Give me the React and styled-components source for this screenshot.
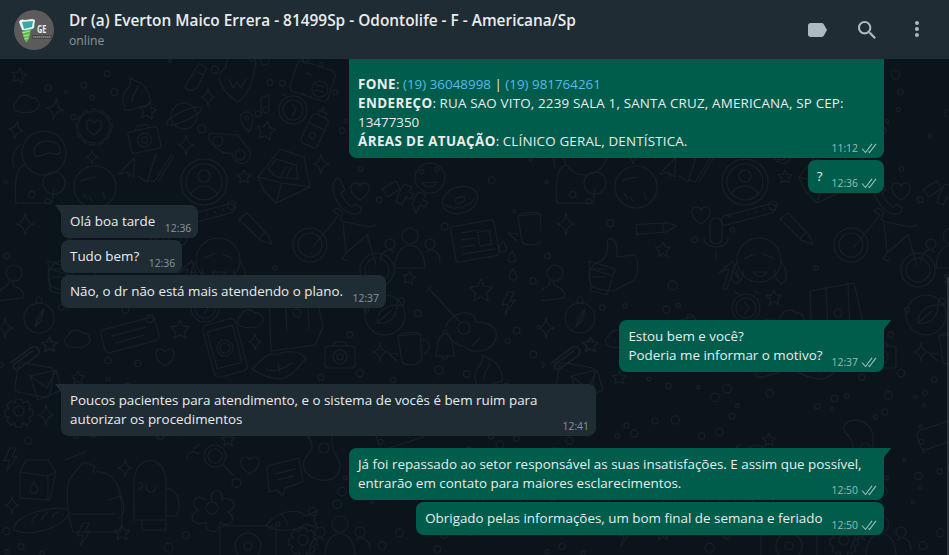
import React from 'react';
import styled, { createGlobalStyle } from 'styled-components';

// wallpaper doodles, each one drawn round 0,0
const star = (r = 8) => {
  let pts = [];
  for (let i = 0; i < 10; i++) {
    const a = (Math.PI / 5) * i - Math.PI / 2;
    const d = i % 2 ? r * 0.48 : r;
    pts.push(`${(Math.cos(a) * d).toFixed(1)},${(Math.sin(a) * d).toFixed(1)}`);
  }
  return `<polygon points="${pts.join(' ')}"/>`;
};
const spark = (r = 8) =>
  `<path d="M0 ${-r}Q1 -1 ${r * 0.8} 0Q1 1 0 ${r}Q-1 1 ${-r * 0.8} 0Q-1 -1 0 ${-r}Z"/>`;
const cloud = '<path d="M-12 7c-6-1-7-9-2-11 1-6 10-8 14-3 6-1 10 5 7 10-3 5-12 5-19 4z"/>';
const heart = '<path d="M0 9C-13 1-10-8-5-8c2 0 4 1 5 3 1-2 3-3 5-3 5 0 8 9-5 17z"/>';
const flowerHeart =
  '<circle r="16"/><circle r="18" stroke-dasharray="6 3"/><path d="M0 8C-11 1-8-7-4-7c2 0 3 1 4 3 1-2 2-3 4-3 4 0 7 8-4 15z"/>';
const astronaut =
  '<circle r="22"/><path d="M-10 -2c0-12 24-14 26-2 1 6-4 6-8 4-5-2-18 10-18-2z"/><path d="M-20 12c-8 2-10 20-8 38h36l2-14M-23 -8c-8 4-10 14-7 22"/><circle cx="10" cy="30" r="11"/>';
const moon =
  '<circle r="21"/><path d="M-14-6c6-4 10-2 14-4M-6 10l3 4M8 6l2 6M-12 6l4 6"/>';
const camera =
  '<rect x="-15" y="-9" width="30" height="22" rx="3"/><path d="M-7-9l2-4h10l2 4"/><circle cy="2" r="7"/><circle cy="2" r="3"/>';
const planet =
  '<circle r="13"/><ellipse rx="19" ry="5" transform="rotate(-24)"/>';
const flameHeart =
  '<path d="M0 20C-22 6-22-10-12-14c-2-6 4-10 6-16 2 6 6 6 8 2 2 4 8-2 12-8 2 6 6 16 2 24-1 14-6 24-16 32z"/><path d="M-9-3l4 9 4-6 4 6 5-9"/>';
const clock = '<circle r="14"/><circle r="10"/><path d="M-1-6l4 6-4 6M-11-16l4 2M9-17l4 2"/>';
const bottle =
  '<rect x="-9" y="-15" width="18" height="32" rx="4"/><path d="M-4-15v-5h8v5M-9-4h18"/><circle cy="6" r="3"/>';
const note = '<path d="M-4 8V-8l8-3v14"/><circle cx="-7" cy="8" r="3"/><circle cx="1" cy="4" r="3"/>';
const pin = '<path d="M0 12C-8 2-8-8 0-8s8 10 0 20z"/><circle cy="-2" r="2"/>';
const glasses =
  '<path d="M-20-12l28 2 12 16c2 8-4 14-10 12-6-1-8-6-8-10-4 1-10 0-14-4-6-4-12-10-8-16z"/><circle cx="-12" cy="-4" r="5"/><circle cx="10" cy="10" r="5"/>';
const envelope =
  '<path d="M-26 2L-4-26 20-18 26 12-8 28-20 16z"/><path d="M-26 2L-2 8 26 12M-8 28L-2 8"/><path d="M-16-6l8-10 20 6 2 14-22-2z"/><path d="M2-8l-6 10M8-8l-6 10"/>';
const profile =
  '<circle r="23"/><circle r="18"/><circle cy="-6" r="6"/><path d="M-13 13c2-12 24-12 26 0"/>';
const checks = '<path d="M-20 8l9 6L-2-14M-10 12l6 2L14-14M0 14L16-12"/>';
const plane = '<path d="M-10 4L10-8 4 10-1 4zM-1 4l1 5"/>';
const rocket =
  '<path d="M-14 22c2-10-4-6 0-16 2-6 8-6 6-16 6 4 16 4 20 20 2 6-2 6 0 6-10 2-18 8-26 6z"/><path d="M-6 14c0-10 4-8 6-16"/>';
const pen = '<path d="M-8 10L2-14l8 3L4 10c-4 5-12 5-12 0zM1-6l7 3"/>';
const card =
  '<rect x="-20" y="-18" width="40" height="32" rx="5" transform="rotate(18)"/><circle cx="8" cy="6" r="8"/><path d="M-6-10l6 2M4 2l8 2M3 7l8 2"/>';
const face =
  '<circle r="15"/><path d="M-8-4c-4-3-2-6 0-4 1-2 4 0 0 4zM6-6c-3-3-1-6 1-4 2-1 4 1-1 4zM-8 5c4 6 12 5 15-1z"/>';
const donut =
  '<ellipse rx="18" ry="13" transform="rotate(-18)"/><ellipse rx="5" ry="3" transform="rotate(-18)"/><path d="M-15 4l3 3 3-1 3 3 4-2 4 1 4-3 4-1 4-5"/>';
const phone =
  '<path d="M-8-18c-6 2-6 6-6 10 0 12 10 24 20 26 5 1 9-2 8-6l-6-4-3 3c-4-2-10-10-11-14l4-3z"/>';
const ffCard = '<path d="M-18-6l14-8 4 8-12 8zM-2 0l6-11 8 3-3 5 5 2-3 5-5-2-4 8-6-3zM12 8l6-11 8 3-3 5 5 2-3 5-5-2-4 8z"/>';
const pencil = '<path d="M-20-6l6-8 26 16 6 8-12-1zM-16-12l-4 8M8 0l-4 8"/>';
const bike =
  '<circle cx="-33" cy="0" r="17"/><circle cx="-33" cy="0" r="12"/><circle cx="34" cy="25" r="17"/><circle cx="34" cy="25" r="12"/><path d="M-30 2L-4-30l-6-4 4-3 6 4-3 7 4 3 26 5 6-2M0-22l3 30 22-19M3 8l-4 6 6 2M24-10l9 30"/>';
const people =
  '<circle cy="-14" r="8"/><path d="M-15 18c0-30 30-30 30 0z"/><circle cx="-20" cy="-6" r="5"/><path d="M-30 12c0-12 10-14 14-10"/><circle cx="20" cy="-6" r="5"/><path d="M30 12c0-12-10-14-14-10"/>';
const news =
  '<rect x="-22" y="-18" width="44" height="36" rx="3" transform="rotate(-10)"/><path d="M-14-8l18-3M-14-1l14-2M-14 6l14-2M-12 13l32-5"/><rect x="4" y="-8" width="12" height="14" transform="rotate(-10)"/>';
const mug =
  '<path d="M-12-14l22-2 2 26c-4 6-16 6-20 2zM12-10c8-2 10 10 2 14M-12-14c2-3 20-5 22-2"/><path d="M-12 4l-10-1 9 8"/>';
const drops = '<path d="M0-7c-5 7-5 11 0 11s5-4 0-11z"/>';
const person = '<circle cy="-12" r="8"/><path d="M-5-4c-1 4-1 4-4 6-7 4-10 8-8 14l26-3c2-6-3-10-9-12-2-2-2-3-1-5"/>';
const glass = '<path d="M-12-14l26 8-8 26-16-4zM-10-6l22 7"/>';
const bolt = '<path d="M-2-12l-6 13 6-1-3 11 10-15-5 1 4-9z"/>';
const compass =
  '<circle r="15"/><circle cy="-18" r="3"/><path d="M5-9L-4 9l2-10zM5-9l-3 12-6 6"/>';
const guitar =
  '<path d="M-30-32l30 32M-34-30l5-6"/><circle cx="4" cy="6" r="6"/><path d="M-8-4C-22 6-8 24 4 24c6 8 28 8 32-8 2-12-8-16-20-16 0-8-12-14-24-4z"/><path d="M12 24l8-8"/>';
const whatsPhone =
  '<rect x="-17" y="-27" width="34" height="54" rx="5" transform="rotate(-15)"/><rect x="-13" y="-20" width="26" height="38" transform="rotate(-15)"/><circle r="8"/><circle r="5"/>';
const lips =
  '<path d="M-28 4C-18-4-14-14-2-10c4-4 22-6 28 4-8 6-12 18-26 20-12 0-22-6-28-10zM-14 4c6 4 18 0 26-6M-2-2l2 10"/>';
const bell = '<path d="M-10 10c4-6 0-20 10-22 10 2 6 16 10 22zM-3 10c0 4 6 4 6 0"/><circle cy="-14" r="2"/>';
const clip = '<path d="M-14 8L6-7c6-4 12 3 6 8L-6 14c-3 2-7-2-4-5L8-4"/>';
const band = '<path d="M-26 4L20-8c6-1 8 6 2 9L-24 13c-5 1-6-7-2-9zM-2 2l1 1M6 0l1 1M14-3l1 1"/>';
const mic = '<rect x="-6" y="-22" width="12" height="26" rx="6"/><path d="M-12-2c0 12 24 12 24 0M0 10v10"/>';
const thumb =
  '<path d="M-10-4c6-4 8-12 6-20 4-6 10 0 10 10v6l16-2c6 0 6 20 0 26L2 26c-8 0-14-2-20-4-6-6-6-22 8-26z"/><path d="M-18 4h12M-18 12h12"/>';
const girl =
  '<circle r="22"/><path d="M-22 2c-8 10-6 20 0 22 4-4 8-10 6-14M22 2c8 10 6 20 0 22-4-4-8-10-6-14M-14-2l10-4M4-6l10 4M-6 12c4 6 10 6 14 0z"/>';
const map =
  '<path d="M-24-14l44-8 10 44-8 18-44 6z"/><path d="M-8-18l2 44M14-22l2 46"/><circle cx="4" cy="8" r="4"/>';
const leaf = '<circle r="20"/><path d="M-8 8C-8-6 4-10 12-10c0 10-6 20-20 18zM-8 8L6-4"/>';
const arrow = '<path d="M-4 14L2-6l-10 4 14-12 6 18-6-8-6 18z"/>';
const paperBar = '<rect x="-28" y="-12" width="56" height="24" rx="4" transform="rotate(-15)"/><path d="M-18 1l34-9M-14 8l28-8"/>';
const mail =
  '<rect x="-24" y="-16" width="36" height="30" rx="4" transform="rotate(10)"/><path d="M-10-6l26-6 6 20-24 10zM-10-6l17 12 9-18"/>';
const gear =
  '<circle r="5"/><path d="M-3-12h6l1 4 4-2 4 4-2 4 4 1v6l-4 1 2 4-4 4-4-2-1 4h-6l-1-4-4 2-4-4 2-4-4-1v-6l4-1-2-4 4-4 4 2z"/>';
const carton = '<path d="M-18-10l6-12h22l8 12-6 28-30-2zM-18-10l28 4 8-4M10-6v24M-4 0c-5 7-5 11 0 11s5-4 0-11z"/>';
const backpack =
  '<path d="M-26-10l14-18 12 4-2 6c20-2 32 10 28 60H-22c-4-14-8-36-4-52zM-30-30l20-8M-24 24h44M14 10l12-4c4 10 4 20-2 22"/>';
const bread = '<path d="M-28 10C-30-6 16-16 26-10c6 10-30 30-54 20zM-10 2c0-4 4-6 6-8M0 0c0-4 4-6 6-8M10-2c0-4 4-4 6-6"/>';
const helmet =
  '<path d="M-16 30V-10c2-26 30-26 32 0v40zM-10-8c4 2 2 8-2 8M6-4c0 8-10 8-10 0M16-2c14 2 16 20 10 28H16M-8 30v10h24V30"/>';
const flower =
  '<circle r="6"/><path d="M0-6C-4-20 12-22 10-8c10-6 18 8 6 12 10 6 2 18-8 10 0 14-16 12-14 0-12 6-20-6-8-12-10-6-2-18 8-10"/>';
const fish = '<path d="M-24 8C-14-8 8-10 16-2l12-6-4 10 4 8-12-4c-10 8-28 8-40 2zM-8-4l6 10"/><circle cx="-12" cy="6" r="2"/>';
const bubble = '<path d="M-18-14l32-8 4 24-18 6-2 8-6-6-8 2zM-10-6l20-5M-8 0l16-4"/>';
const snake = '<path d="M-14-30c14-6 28 4 26 20-2 12 16 20 4 34-8 8-28 4-32-8-4-14 14-14 6-28-4-8-12-10-4-18z"/><circle cx="4" cy="-4" r="5"/>';
const paw = '<circle cx="10" cy="-4" r="11"/><circle cx="10" cy="-4" r="7"/><path d="M18 5l10 10M-12-10l6-6M-18-2c0-6 6-8 12-4"/>';
const turntable = '<rect x="-28" y="-20" width="56" height="40" rx="4"/><circle r="13"/><circle r="4"/>';
const milkbar = '<rect x="-24" y="-8" width="48" height="20" rx="5" transform="rotate(-18)"/>';

const doodles = [
  [star(8), 19, 76, 10], [cloud, 31, 105, 0], [spark(11), 55, 109, 10], [spark(9), 16, 130, 10],
  [flowerHeart, 94, 127, 0], [astronaut, 44, 153, 0], [moon, 95, 187, 0], [camera, 144, 138, -12],
  [star(9), 148, 111, 10], [spark(9), 208, 97, 0], [planet, 184, 116, 0], [flameHeart, 238, 82, 0],
  [clock, 293, 110, 0], [bottle, 315, 130, 25], [note, 265, 106, 0], [pin, 247, 120, -10],
  [star(10), 266, 131, 10], [glasses, 230, 145, 0], [envelope, 284, 175, 0], [profile, 204, 182, 0],
  [checks, 158, 168, 0], [plane, 127, 168, -15], [spark(10), 186, 145, 0], [spark(7), 92, 157, 0],
  [spark(10), 321, 164, 0], [star(7), 244, 177, 0], [rocket, 138, 88, 0], [pen, 195, 77, 10],
  [card, 312, 83, 0], [face, 430, 178, 0], [donut, 460, 200, 0], [phone, 347, 196, 0],
  [heart, 360, 191, 0], [ffCard, 400, 195, 0], [pencil, 257, 230, 15], [bike, 343, 245, 0],
  [people, 410, 250, 0], [news, 475, 241, 0], [mug, 530, 230, 0], [spark(11), 566, 224, 0],
  [drops, 503, 248, 0], [drops, 512, 258, 0], [drops, 513, 276, 0], [person, 555, 285, 0],
  [star(12), 481, 291, 0], [star(7), 409, 278, 10], [bolt, 510, 304, 0], [compass, 580, 318, 0],
  [guitar, 460, 322, 0], [spark(10), 546, 328, 0], [rocket, 490, 365, 0], [whatsPhone, 225, 348, 0],
  [spark(8), 255, 342, 0], [lips, 280, 365, 0], [camera, 340, 355, 0], [mug, 410, 350, 0],
  [bell, 445, 346, 0], [spark(9), 380, 352, 0], [clip, 565, 355, 0], [star(8), 590, 345, 0],
  [glass, 601, 275, 0], [band, 209, 212, 0], [clip, 25, 355, 0], [star(8), 50, 345, 0],
  [cloud, 82, 340, 0], [paperBar, 130, 335, 0], [star(10), 180, 330, 0], [clock, 205, 308, 0],
  [cloud, 255, 320, 0], [mail, 40, 382, 0], [gear, 19, 411, 0], [spark(10), 46, 415, 0],
  [star(7), 78, 378, 0], [heart, 165, 357, 0], [carton, 38, 482, 0], [backpack, 95, 490, 0],
  [bread, 42, 520, 0], [helmet, 150, 490, 0], [flower, 212, 508, 0], [fish, 290, 518, 0],
  [bubble, 285, 480, 0], [spark(9), 125, 468, 0], [spark(9), 12, 505, 0], [paw, 205, 460, 0],
  [snake, 320, 452, 0], [gear, 303, 540, 0], [people, 340, 538, 0], [turntable, 248, 546, 0],
  [bolt, 85, 535, 0], [star(8), 122, 533, 0], [heart, 250, 465, 0], [bolt, 12, 460, 0],
  [star(7), 228, 440, 0], [milkbar, 400, 432, 0], [mic, 175, 240, 0], [thumb, 70, 265, 0],
  [girl, 218, 260, 0], [arrow, 186, 275, 0], [map, 293, 305, 0], [leaf, 385, 315, 0],
  [star(8), 233, 298, 0], [star(8), 122, 250, 0], [heart, 160, 215, 0], [pencil, 115, 228, -35],
];

const sizes = {
  [flowerHeart]: 20, [astronaut]: 40, [envelope]: 32, [profile]: 26, [bike]: 55, [backpack]: 40,
  [helmet]: 36, [guitar]: 38, [whatsPhone]: 30, [lips]: 30, [snake]: 34, [girl]: 30, [map]: 34,
  [thumb]: 30, [news]: 26, [people]: 28, [turntable]: 30,
};

function buildWallpaper() {
  const tileW = 541;
  const tileH = 496;
  const placed = doodles.map(([, x, y]) => [x % tileW, y - 59]);
  const radii = doodles.map(([s]) => sizes[s] || 17);
  let seed = 7;
  const rnd = () => {
    seed = (seed * 16807) % 2147483647;
    return seed / 2147483647;
  };
  let dots = '';
  for (let i = 0; i < 420; i++) {
    const x = rnd() * tileW;
    const y = rnd() * tileH;
    const r = 1.5 + rnd() * 3;
    const clash = placed.some(([px, py], n) => Math.hypot(px - x, py - y) < radii[n] + r);
    if (!clash) {
      dots += `<circle cx="${x.toFixed(1)}" cy="${y.toFixed(1)}" r="${r.toFixed(1)}"/>`;
      placed.push([x, y]);
      radii.push(r + 5);
    }
  }
  const shapes = doodles
    .map(([s, x, y, rot]) => `<g transform="translate(${x % tileW} ${y - 59}) rotate(${rot})">${s}</g>`)
    .join('');
  const svg = `<svg xmlns="http://www.w3.org/2000/svg" width="${tileW}" height="${tileH}" fill="none" stroke="#161f26" stroke-width="1.1" stroke-linejoin="round" stroke-linecap="round">${shapes}${dots}</svg>`;
  return `url("data:image/svg+xml,${encodeURIComponent(svg)}")`;
}

const wallpaper = buildWallpaper();

const GlobalStyle = createGlobalStyle`
  html, body {
    margin: 0;
    padding: 0;
    height: 100%;
    background: #0b141a;
  }
  * {
    box-sizing: border-box;
  }
`;

const Page = styled.div`
  width: 949px;
  height: 555px;
  display: flex;
  flex-direction: column;
  overflow: hidden;
  font-family: 'Open Sans', 'Noto Sans', sans-serif;
  color: #e9edef;
`;

const Header = styled.header`
  height: 59px;
  flex: none;
  display: flex;
  align-items: center;
  padding: 0 20px 0 14px;
  background: #202c33;
`;

const Avatar = styled.svg`
  width: 40px;
  height: 40px;
  flex: none;
  margin: 0 15px 0 0;
`;

const Contact = styled.div`
  flex: 1;
  min-width: 0;
`;

const Title = styled.div`
  font-size: 15.42px;
  font-weight: 600;
  line-height: 21px;
  margin-bottom: 1px;
  color: #e9edef;
`;

const Status = styled.div`
  font-size: 12.2px;
  line-height: 18px;
  color: #8696a0;
`;

const Actions = styled.div`
  display: flex;
  align-items: center;
  gap: 26px;
`;

const ActionIcon = styled.svg`
  width: 24px;
  height: 24px;
  display: block;
  fill: #aebac1;
`;

const Chat = styled.main`
  flex: 1;
  position: relative;
  display: flex;
  flex-direction: column;
  justify-content: flex-end;
  padding: 0 65px 20px 61px;
  background-color: #0b141a;
  background-image: ${wallpaper};
  background-repeat: repeat;
`;

const Scrollbar = styled.div`
  position: absolute;
  right: 0;
  top: 218px;
  bottom: 0;
  width: 2px;
  background: rgba(255, 255, 255, 0.14);
`;

const Row = styled.div`
  display: flex;
  justify-content: ${p => (p.$out ? 'flex-end' : 'flex-start')};
  margin-top: ${p => (p.$first ? '12px' : '2px')};

  &:first-child {
    margin-top: 0;
  }
`;

const Bubble = styled.div`
  position: relative;
  width: ${p => (p.$wide ? '535px' : 'auto')};
  padding: ${p => (p.$clipped ? '16px 7px 7px 9px' : '7px 7px 7px 9px')};
  font-size: 13.4px;
  line-height: 19px;
  color: #e9edef;
  background: ${p => (p.$out ? '#005c4b' : '#202c33')};
  border-radius: 7.5px;
  ${p => p.$clipped && 'border-top-left-radius: 0; border-top-right-radius: 0;'}
  ${p => p.$tail && p.$out && 'border-top-right-radius: 0;'}
  ${p => p.$tail && !p.$out && 'border-top-left-radius: 0;'}

  ${p =>
    p.$tail &&
    `
    &::before {
      content: '';
      position: absolute;
      top: 0;
      width: 8px;
      height: 11px;
      background: ${p.$out ? '#005c4b' : '#202c33'};
      ${
        p.$out
          ? 'right: -7px; clip-path: polygon(0 0, 100% 0, 0 100%);'
          : 'left: -6px; clip-path: polygon(0 0, 100% 0, 100% 100%);'
      }
    }
  `}
`;

const Spacer = styled.span`
  display: inline-block;
  width: ${p => (p.$out ? '54.5px' : '36px')};
  height: 1px;
`;

const Meta = styled.span`
  position: absolute;
  right: 7px;
  bottom: 2px;
  display: flex;
  align-items: center;
  gap: 3px;
  font-size: 10.4px;
  line-height: 15px;
  color: ${p => (p.$out ? 'rgba(255, 255, 255, 0.6)' : '#8696a0')};
`;

const Ticks = styled.svg`
  width: 16px;
  height: 11px;
  flex: none;
  fill: none;
  stroke: rgba(255, 255, 255, 0.62);
  stroke-width: 1.1;
`;

const Phone = styled.span`
  color: #53bdeb;
`;

const Label = styled.strong`
  font-weight: 700;
  letter-spacing: 0.4px;
`;

const Caps = styled.span`
  letter-spacing: 0.17px;
`;

const messages = [
  {
    id: 1,
    out: true,
    clipped: true,
    wide: true,
    time: '11:12',
    body: (
      <>
        <Label>FONE</Label>: <Phone>(19) 36048998</Phone> | <Phone>(19) 981764261</Phone>
        <br />
        <Label>ENDEREÇO</Label>: <Caps>RUA SAO VITO, 2239 SALA 1, SANTA CRUZ, AMERICANA, SP CEP:</Caps>
        <br />
        13477350
        <br />
        <Label>ÁREAS DE ATUAÇÃO</Label>: <Caps>CLÍNICO GERAL, DENTÍSTICA.</Caps>
      </>
    ),
  },
  { id: 2, out: true, time: '12:36', body: '?' },
  { id: 3, first: true, tail: true, time: '12:36', body: 'Olá boa tarde' },
  { id: 4, time: '12:36', body: 'Tudo bem?' },
  { id: 5, time: '12:37', body: 'Não, o dr não está mais atendendo o plano.' },
  {
    id: 6,
    out: true,
    first: true,
    tail: true,
    time: '12:37',
    body: (
      <>
        Estou bem e você?
        <br />
        Poderia me informar o motivo?
      </>
    ),
  },
  {
    id: 7,
    first: true,
    tail: true,
    wide: true,
    time: '12:41',
    body: (
      <>
        Poucos pacientes para atendimento, e o sistema de vocês é bem ruim para
        <br />
        autorizar os procedimentos
      </>
    ),
  },
  {
    id: 8,
    out: true,
    first: true,
    tail: true,
    wide: true,
    time: '12:50',
    body: (
      <>
        Já foi repassado ao setor responsável as suas insatisfações. E assim que possível,
        <br />
        entrarão em contato para maiores esclarecimentos.
      </>
    ),
  },
  { id: 9, out: true, time: '12:50', body: 'Obrigado pelas informações, um bom final de semana e feriado' },
];

function GeLogo() {
  return (
    <Avatar viewBox="0 0 40 40">
      <circle cx="20" cy="20" r="20" fill="#5b5b5b" />
      <path d="M5 12c1-3 4-3 6-2 3 0 7-2 10 0l-1 8c-3 2-8 3-12 2z" fill="#e4f2f1" />
      <path d="M8 12l11-1-1 6-8 2z" fill="#3aa6a8" />
      <path d="M8 21l9-2-1 6-1 4-3 4-2-6z" fill="#5dbb46" />
      <path d="M8 23l8-2M9 26l6-1M10 29l4-1" stroke="#d6efcf" strokeWidth="0.8" />
      <text
        x="23"
        y="23"
        fontFamily="Open Sans, sans-serif"
        fontSize="11"
        fontWeight="700"
        fill="#eeeeee"
        textLength="9.500"
        lengthAdjust="spacingAndGlyphs"
      >
        GE
      </text>
      <rect x="18" y="25" width="20" height="4" fill="#454545" />
      <path d="M19 27h18" stroke="#b8b8b8" strokeWidth="1" strokeDasharray="1.500 0.500" />
    </Avatar>
  );
}

function MessageRow({ m }) {
  return (
    <Row $out={m.out} $first={m.first}>
      <Bubble $out={m.out} $tail={m.tail} $clipped={m.clipped} $wide={m.wide}>
        {m.body}
        <Spacer $out={m.out} />
        <Meta $out={m.out}>
          {m.time}
          {m.out && (
            <Ticks viewBox="0 0 16 11">
              <path d="M1 5.500l3.500 4L11 .8M7.500 8.500l1 1L15 .8" />
            </Ticks>
          )}
        </Meta>
      </Bubble>
    </Row>
  );
}

export default function App() {
  return (
    <>
      <GlobalStyle />
      <Page>
        <Header>
          <GeLogo />
          <Contact>
            <Title>Dr (a) Everton Maico Errera - 81499Sp - Odontolife - F - Americana/Sp</Title>
            <Status>online</Status>
          </Contact>
          <Actions>
            <ActionIcon viewBox="0 0 24 24">
              <path d="M3 7.500C3 6.100 4.100 5 5.500 5h11.300c.7 0 1.300.3 1.800.9L22 12l-3.400 6.100c-.5.6-1.100.9-1.800.9H5.500C4.100 19 3 17.900 3 16.500z" />
            </ActionIcon>
            <ActionIcon viewBox="0 0 24 24">
              <path d="M15.900 14.300H15l-.3-.3c1-1.100 1.600-2.700 1.600-4.300 0-3.700-3-6.700-6.700-6.700S3 6 3 9.700s3 6.700 6.700 6.700c1.600 0 3.200-.6 4.300-1.600l.3.3v.8l5.100 5.100 1.500-1.500-5-5.200zm-6.200 0c-2.600 0-4.600-2.100-4.600-4.600s2.100-4.600 4.600-4.600 4.600 2.100 4.600 4.600-2 4.600-4.600 4.600z" />
            </ActionIcon>
            <ActionIcon viewBox="0 0 24 24">
              <path d="M12 7a2 2 0 1 0-.001-4.001A2 2 0 0 0 12 7zm0 2a2 2 0 1 0-.001 3.999A2 2 0 0 0 12 9zm0 6a2 2 0 1 0-.001 3.999A2 2 0 0 0 12 15z" />
            </ActionIcon>
          </Actions>
        </Header>
        <Chat>
          {messages.map(m => (
            <MessageRow key={m.id} m={m} />
          ))}
          <Scrollbar />
        </Chat>
      </Page>
    </>
  );
}
